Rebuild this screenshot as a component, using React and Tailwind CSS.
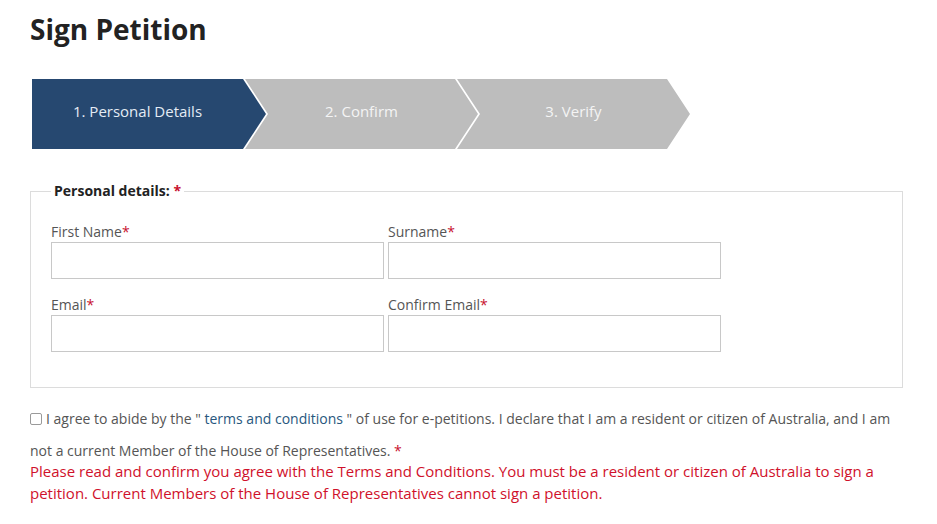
const STEPS = [
  { id: 1, label: '1. Personal Details', active: true },
  { id: 2, label: '2. Confirm', active: false },
  { id: 3, label: '3. Verify', active: false },
];

function Step({ step, first }) {
  return (
    <div
      className={`h-[70px] flex items-center justify-center pb-[5px] text-[15px] ${
        first
          ? 'w-[234px] pr-[23px] bg-[#264870] text-[#e4ecf5]'
          : 'w-[233px] -ml-[21px] pl-[23px] pr-[23px] bg-[#bdbdbd] text-[#f4f4f4]'
      }`}
      style={{
        clipPath: first
          ? 'polygon(0 0, 211px 0, 234px 50%, 211px 100%, 0 100%)'
          : 'polygon(0 0, 210px 0, 233px 50%, 210px 100%, 0 100%, 23px 50%)',
      }}
    >
      {step.label}
    </div>
  );
}

function Field({ label }) {
  return (
    <div className="flex flex-col">
      <label className="text-[14px] leading-[20px] text-[#555]">
        {label}
        <span className="text-[#c8102e]">*</span>
      </label>
      <input
        type="text"
        className="w-[333px] h-[37px] border border-[#c8c8c8] bg-white outline-none"
      />
    </div>
  );
}

export default function App() {
  return (
    <div className="w-[937px] h-[524px] bg-white pl-[30px] pt-[11px] font-['Open_Sans',sans-serif] overflow-hidden">
      <h1 className="text-[28px] leading-[36px] font-bold text-[#222]">Sign Petition</h1>

      <div className="flex mt-[32px] ml-[2px]">
        {STEPS.map((step, i) => (
          <Step key={step.id} step={step} first={i === 0} />
        ))}
      </div>

      <fieldset className="mt-[32px] w-[873px] border border-[#dcdcdc] px-[20px] pt-[21px] pb-[35px]">
        <legend className="px-[3px] text-[14px] leading-[20px] font-bold text-[#222]">
          Personal details: <span className="text-[#c8102e]">*</span>
        </legend>
        <div className="grid grid-cols-[333px_333px] gap-x-[4px] gap-y-[16px]">
          <Field label="First Name" />
          <Field label="Surname" />
          <Field label="Email" />
          <Field label="Confirm Email" />
        </div>
      </fieldset>

      <div className="w-[873px] mt-[15px]">
        <p className="text-[14px] leading-[32px] text-[#555]">
          <input
            type="checkbox"
            className="appearance-none inline-block align-[-1px] w-[12px] h-[12px] border border-[#9a9a9a] rounded-[2px] bg-white mr-[4px]"
          />
          I agree to abide by the " <a className="text-[#28577e]">terms and conditions</a> " of use for
          e-petitions. I declare that I am a resident or citizen of Australia, and I am not a current
          Member of the House of Representatives. <span className="text-[#c8102e]">*</span>
        </p>
        <p className="-mt-[7px] text-[15px] leading-[22px] text-[#d0112b]">
          Please read and confirm you agree with the Terms and Conditions. You must be a resident or
          citizen of Australia to sign a petition. Current Members of the House of Representatives
          cannot sign a petition.
        </p>
      </div>
    </div>
  );
}
